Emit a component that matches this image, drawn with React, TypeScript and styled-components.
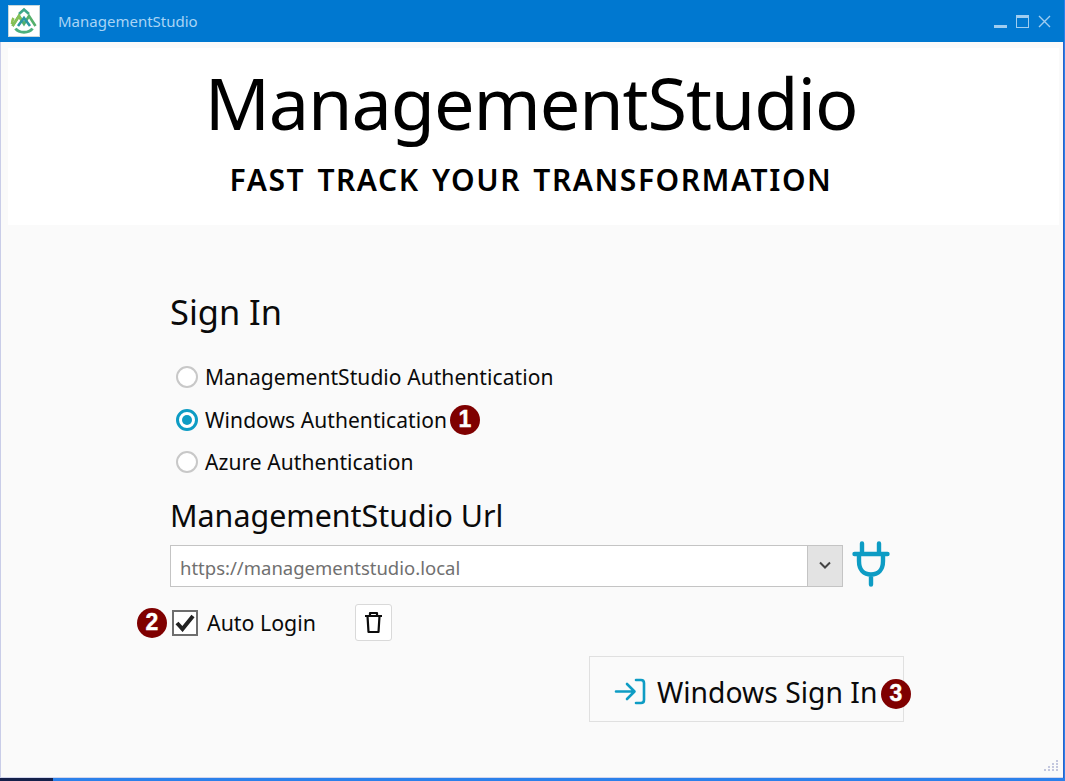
import React from "react";
import styled, { createGlobalStyle } from "styled-components";

const Global = createGlobalStyle`
  html, body { margin: 0; padding: 0; width: 1065px; height: 781px; overflow: hidden; background: #2b7be0; }
  * { box-sizing: border-box; }
  #root { width: 1065px; height: 781px; }
`;

const FONT = `"Noto Sans", "Open Sans", sans-serif`;

const Desktop = styled.div`
  width: 1065px; height: 781px; display: flex; flex-direction: column;
  font-family: ${FONT}; color: #0a0a0a;
  background: linear-gradient(90deg, #14204a 0, #14204a 53px, #2b80ea 53px, #2b80ea 100%);
`;
const Win = styled.div`
  width: 1063px; height: 778px; display: flex; flex-direction: column;
  border-left: 1px solid #c9cde8; background: #fafafa; box-shadow: 1px 0 0 #2a63c8;
  border-bottom: 1px solid #d3d6ec;
`;
const TitleBar = styled.div`
  height: 42px; flex: none; background: #0078d0; display: flex; align-items: center;
  padding: 0 0 0 8px; margin-left: -1px; width: 1064px;
`;
const LogoBox = styled.div`
  width: 32px; height: 32px; background: #fff; display: flex; align-items: center; justify-content: center;
  border: 1px solid #c8d8dc;
`;
const AppName = styled.div`
  margin-left: 18px; font-size: 15px; color: #a9d4f5;
`;
const WinButtons = styled.div`
  margin-left: auto; display: flex; align-items: center; gap: 9px; padding-right: 13px;
`;
const Header = styled.header`
  margin: 6px 4px 0 7px; padding-right: 5px; height: 177px; flex: none; background: #fff; display: flex; flex-direction: column; align-items: center;
`;
const BigTitle = styled.h1`
  margin: 11px 0 0; font-size: 72px; line-height: 86px; font-weight: 400; color: #000; letter-spacing: -1.1px; white-space: nowrap;
`;
const Tagline = styled.div`
  margin-top: 16px; font-size: 30px; line-height: 38px; font-weight: 600; color: #000; letter-spacing: 1.55px; word-spacing: 3px; white-space: nowrap;
`;
const Main = styled.main`
  flex: 1; position: relative; display: flex; flex-direction: column; padding: 62px 0 0 169px;
`;
const SignIn = styled.h2`
  margin: 0; font-size: 34.4px; line-height: 50px; font-weight: 400; color: #0a0a0a;
`;
const RadioList = styled.div`
  margin: 24px 0 0 5px; display: flex; flex-direction: column; gap: 10px;
`;
const RadioRow = styled.div`
  height: 32.5px; display: flex; align-items: center; font-size: 21px; letter-spacing: 0.07px; color: #0a0a0a; white-space: nowrap;
`;
const RadioMark = styled.span<{ $on?: boolean }>`
  width: 22px; height: 22px; border-radius: 50%; flex: none; margin: 0 7px 0 1px; background: #fff;
  border: ${p => (p.$on ? "3px solid #0d9cc4" : "2px solid #c8c8c8")};
  display: flex; align-items: center; justify-content: center;
  &::after { content: ""; width: 10px; height: 10px; border-radius: 50%; background: ${p => (p.$on ? "#0d9cc4" : "transparent")}; }
`;
const Badge = styled.span`
  width: 30px; height: 30px; border-radius: 50%; background: #7f0000; color: #fff; flex: none;
  display: inline-flex; align-items: center; justify-content: center;
  font-family: "Liberation Sans", Arial, sans-serif; font-weight: 700; font-size: 23px; line-height: 1;
  -webkit-text-stroke: 0.4px #fff;
`;
const RowBadge = styled(Badge)`
  margin-left: 3px;
`;
const UrlLabel = styled.div`
  margin-top: 19px; font-size: 30.4px; line-height: 36px; color: #0a0a0a; white-space: nowrap;
`;
const UrlRow = styled.div`
  margin-top: 11px; display: flex; align-items: center; height: 42px;
`;
const Combo = styled.div`
  width: 673px; height: 42px; display: flex; background: #fff; border: 1px solid #c4c4c4;
`;
const ComboText = styled.div`
  flex: 1; padding-left: 9px; font-size: 18.5px; line-height: 44px; color: #707070;
`;
const ComboButton = styled.div`
  width: 35px; flex: none; background: #e3e3e3; border-left: 1px solid #c4c4c4; display: flex; align-items: center; justify-content: center;
`;
const PlugWrap = styled.div`
  margin: 0 0 4px 8px; width: 40px; height: 46px; display: flex; align-items: center; justify-content: center;
`;
const LoginRow = styled.div`
  margin-top: 17px; margin-left: -33px; display: flex; align-items: center; height: 38px;
`;
const Check = styled.div`
  width: 26px; height: 26px; margin-left: 5px; background: #fff; border: 2px solid #6e6e6e; display: flex; align-items: center; justify-content: center;
`;
const CheckLabel = styled.div`
  margin-left: 9px; width: 148px; font-size: 21.35px; color: #0a0a0a; white-space: nowrap;
`;
const IconButton = styled.div`
  width: 37px; height: 37px; background: #fff; border: 1px solid #d9d9d9; border-radius: 3px;
  display: flex; align-items: center; justify-content: center;
`;
const SubmitRow = styled.div`
  margin-top: 14px; margin-left: 419px; width: 315px; height: 66px; border: 1px solid #e0e0e0; display: flex; align-items: center; padding: 6px 0 0 24px; position: relative;
`;
const SubmitText = styled.span`
  margin-left: 11px; font-size: 28.3px; color: #0a0a0a; white-space: nowrap;
`;
const SubmitBadge = styled(Badge)`
  position: absolute; left: 291px; top: 22px;
`;
const Grip = styled.svg`
  position: absolute; right: 5px; bottom: 5px;
`;

const Logo = () => (
  <svg width="28" height="28" viewBox="0 0 28 28" fill="none" strokeWidth="2.6" strokeLinejoin="miter">
    <path d="M3.5 11 A12 12 0 0 0 2 17" stroke="#8cc152" />
    <path d="M9 7 L14 2.5 L19 7" stroke="#3fa78a" />
    <path d="M2.5 19 L9 9 L14 17 L19 9 L25.5 19" stroke="#55b06c" />
    <path d="M2.5 19 L9 9 L12 14" stroke="#86c055" />
    <path d="M8 19 L14 11 L20 19" stroke="#2b97a3" />
    <path d="M5.5 21.5 C9 26.5 19 26.5 22.5 21.5" stroke="#4db07c" strokeWidth="3" />
  </svg>
);

const Dots = () => {
  const pts = [[12, 0], [12, 3], [8, 3], [12, 6], [8, 6], [4, 6], [12, 9], [8, 9], [4, 9], [0, 9]];
  return (
    <Grip width="14" height="12" viewBox="0 0 14 12">
      {pts.map(([x, y]) => <rect key={`${x}-${y}`} x={x} y={y} width="2" height="2" fill="#c3c7de" />)}
    </Grip>
  );
};

export default function App() {
  return (
    <Desktop>
      <Global />
      <Win>
        <TitleBar>
          <LogoBox><Logo /></LogoBox>
          <AppName>ManagementStudio</AppName>
          <WinButtons>
            <svg width="13" height="13" viewBox="0 0 13 13"><rect x="0" y="10" width="13" height="3" fill="#9fcdf0" /></svg>
            <svg width="13" height="13" viewBox="0 0 13 13" fill="none"><rect x="0.5" y="0.5" width="12" height="12" stroke="#9fcdf0" /><rect x="0" y="0" width="13" height="3" fill="#9fcdf0" /></svg>
            <svg width="13" height="13" viewBox="0 0 13 13" stroke="#9fcdf0" strokeWidth="1.4"><path d="M1 1 L12 12 M12 1 L1 12" /></svg>
          </WinButtons>
        </TitleBar>
        <Header>
          <BigTitle>ManagementStudio</BigTitle>
          <Tagline>FAST TRACK YOUR TRANSFORMATION</Tagline>
        </Header>
        <Main>
          <SignIn>Sign In</SignIn>
          <RadioList>
            <RadioRow><RadioMark />ManagementStudio Authentication</RadioRow>
            <RadioRow><RadioMark $on />Windows Authentication<RowBadge>1</RowBadge></RadioRow>
            <RadioRow><RadioMark />Azure Authentication</RadioRow>
          </RadioList>
          <UrlLabel>ManagementStudio Url</UrlLabel>
          <UrlRow>
            <Combo>
              <ComboText>https://managementstudio.local</ComboText>
              <ComboButton>
                <svg width="14" height="9" viewBox="0 0 14 9" fill="none" stroke="#444" strokeWidth="2"><path d="M2 1.5 L7 6.5 L12 1.5" /></svg>
              </ComboButton>
            </Combo>
            <PlugWrap>
              <svg width="38" height="46" viewBox="0 0 38 46" fill="none" stroke="#0d9cc4" strokeWidth="4.4" strokeLinecap="round">
                <path d="M10 2.5 V12 M27 2.5 V12 M2.5 13 H35.5 M7 13 V20 C7 29 12 33.5 19 33.5 C26 33.5 31 29 31 20 V13 M19 34 V43.5" />
              </svg>
            </PlugWrap>
          </UrlRow>
          <LoginRow>
            <Badge>2</Badge>
            <Check>
              <svg width="20" height="18" viewBox="0 0 20 18" fill="none" stroke="#222" strokeWidth="4"><path d="M2 9 L7.5 15 L18 2" /></svg>
            </Check>
            <CheckLabel>Auto Login</CheckLabel>
            <IconButton>
              <svg width="19" height="23" viewBox="0 0 19 23" fill="none" stroke="#0c0c0c" strokeWidth="2.2" strokeLinejoin="round">
                <path d="M1 5 H18 M6 5 V2 H13 V5 M3.5 5 L4.5 21 H14.5 L15.5 5" />
              </svg>
            </IconButton>
          </LoginRow>
          <SubmitRow>
            <svg width="32" height="27" viewBox="0 0 32 27" fill="none" stroke="#0d9cc4" strokeWidth="2.6" strokeLinecap="round" strokeLinejoin="round">
              <path d="M2 13.5 H20 M13 6 L20.5 13.5 L13 21 M22 2 H27 Q30 2 30 5 V22 Q30 25 27 25 H22" />
            </svg>
            <SubmitText>Windows Sign In</SubmitText>
            <SubmitBadge>3</SubmitBadge>
          </SubmitRow>
          <Dots />
        </Main>
      </Win>
    </Desktop>
  );
}
